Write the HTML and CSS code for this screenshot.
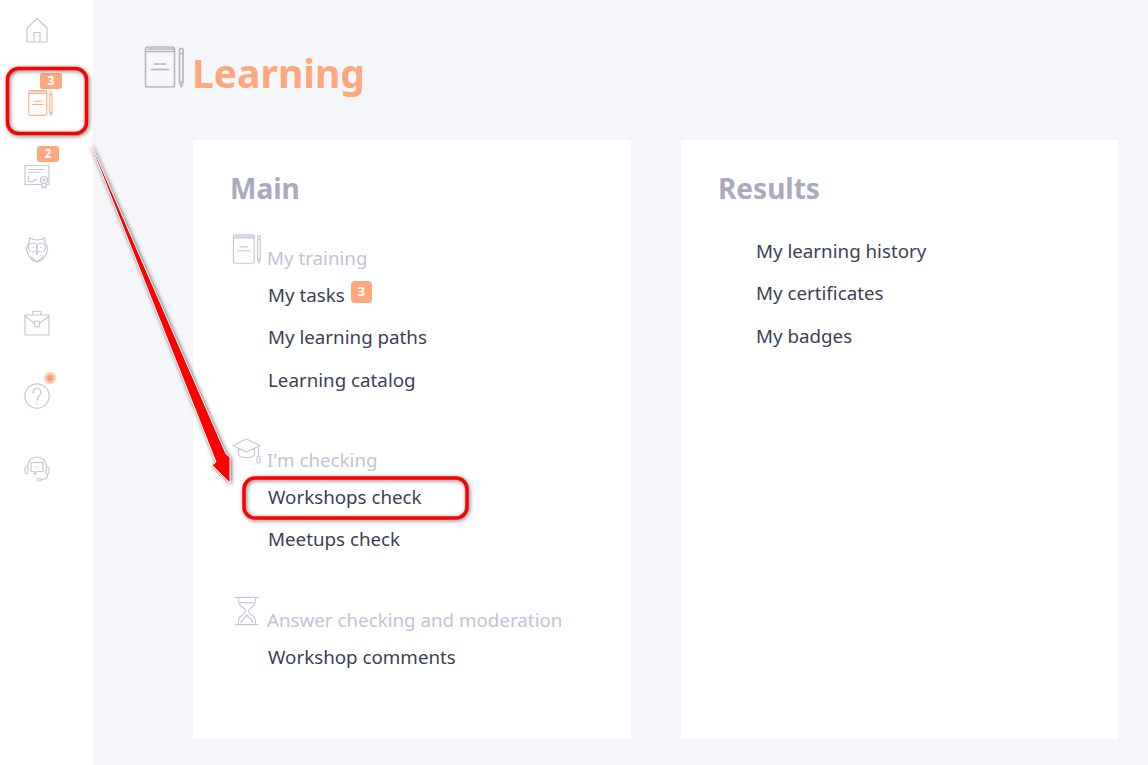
FILE: index.html
```html
<!DOCTYPE html>
<html lang="en">
<head>
    <meta charset="UTF-8">
    <title>Learning</title>
    <link rel="stylesheet" href="styles.css">
</head>
<body>

    <!-- shared notebook icon -->
    <svg class="defs" width="0" height="0">
        <symbol id="book" viewBox="0 0 40 42">
            <g fill="none" stroke="currentColor" stroke-width="1.6" stroke-linecap="round" stroke-linejoin="round">
                <rect x="1" y="1" width="29" height="40" rx="2.5"/>
                <path d="M1 5.5H30M4 3H30"/>
                <path d="M10 18H21M7 23.5H24"/>
                <path d="M35 4a1.8 1.8 0 0 1 3.6 0V36L36.8 41 35 36ZM35 7.5H38.6M35 36H38.6"/>
            </g>
        </symbol>
    </svg>

    <nav class="sidebar">
        <a class="nav-item">
            <svg class="nav-icon" viewBox="0 0 26 26"><path d="M3 25V11L13 1.500 23 11V25ZM10 25V15.500H16V25"/></svg>
        </a>
        <a class="nav-item active">
            <span class="badge nav-badge-first">3</span>
            <svg class="book-nav"><use href="#book"/></svg>
        </a>
        <a class="nav-item">
            <span class="badge nav-badge-second">2</span>
            <svg class="nav-icon" viewBox="0 0 26 26"><path d="M17 21.500H1V2.500H25V21.500H23.500M4.500 6.500H20M4.500 9.500H15M4.500 13V18.500H9L11 16.500H13"/><circle cx="20" cy="17" r="3.500"/><circle cx="20" cy="17" r="1.200"/><path d="M18 20.500V25L20 23.700 22 25V20.500"/></svg>
        </a>
        <a class="nav-item">
            <svg class="nav-icon" viewBox="0 0 26 26"><path d="M5.500 1C7.500 2.500 10 3 13 3S18.500 2.500 20.500 1L21 6C24 9 24 13 22.500 16 21 20.500 17 24 13 25 9 24 5 20.500 3.500 16 2 13 2 9 5 6Z"/><circle cx="9" cy="10.500" r="4.500"/><circle cx="17" cy="10.500" r="4.500"/><path d="M12 15L13 17.500 14 15M7 20L13 25 19 20M9.500 10.500H10M16.500 10.500H17"/></svg>
        </a>
        <a class="nav-item">
            <svg class="nav-icon" viewBox="0 0 26 26"><path d="M1 5H25V25H1ZM9 5V1.500H17V5M1 6L10.500 13.500M25 6L15.500 13.500"/><rect x="10.500" y="11" width="5" height="6" rx="1.500"/></svg>
        </a>
        <a class="nav-item">
            <span class="help-dot"></span>
            <svg class="nav-icon" viewBox="0 0 26 26"><circle cx="13" cy="13" r="12.200"/><path d="M9 10C9 7 11 5 13 5S17 7 17 9.500C17 12.500 13 13 13 17.500M13 20.500V21"/></svg>
        </a>
        <a class="nav-item">
            <svg class="nav-icon" viewBox="0 0 26 26"><path d="M3.500 11C3.500 4.500 8 1 13 1S22.500 4.500 22.500 11"/><rect x="1" y="11" width="3" height="7" rx="1.500"/><rect x="22" y="11" width="3" height="7" rx="1.500"/><path d="M7 6.500H19V15.500H13L10.500 19V15.500H7ZM10.500 11H10.900M13 11H13.400M15.500 11H15.900"/><path d="M23.500 18V20C23.500 23 21 23.500 17 23.500"/><rect x="13" y="22.500" width="4.500" height="2.500" rx="1.200"/></svg>
        </a>
    </nav>

    <main class="content">
        <header class="hero">
            <svg class="hero-icon"><use href="#book"/></svg>
            <h1>Learning</h1>
        </header>

        <div class="cards">
            <section class="card">
                <h2>Main</h2>

                <div class="group">
                    <h3><svg class="group-icon"><use href="#book"/></svg>My training</h3>
                    <a class="link">My tasks <span class="badge link-badge">3</span></a>
                    <a class="link">My learning paths</a>
                    <a class="link">Learning catalog</a>
                </div>

                <div class="group">
                    <h3>
                        <svg class="group-icon" viewBox="0 0 30 30"><path d="M14.500 3L28 9.500 14.500 16 1 9.500ZM6.500 12.500V19C9 22.500 20 22.500 22.500 19V12.500M26.500 10.500V20"/><rect x="25" y="20" width="3" height="7" rx="1.200"/></svg>
                        I'm checking
                    </h3>
                    <a class="link">Workshops check</a>
                    <a class="link">Meetups check</a>
                </div>

                <div class="group">
                    <h3>
                        <svg class="group-icon" viewBox="0 0 30 32"><path d="M3 1.500H27M3 30.500H27M6 1.500V6C6 11 13.500 13 13.500 16S6 21 6 26V30.500M24 1.500V6C24 11 16.500 13 16.500 16S24 21 24 26V30.500M8 7H22M8.500 28.500C10 24 13 23 15 20.500 17 23 20 24 21.500 28.500"/></svg>
                        Answer checking and moderation
                    </h3>
                    <a class="link">Workshop comments</a>
                </div>
            </section>

            <section class="card">
                <h2>Results</h2>
                <div class="plain-group">
                    <a class="link">My learning history</a>
                    <a class="link">My certificates</a>
                    <a class="link">My badges</a>
                </div>
            </section>
        </div>
    </main>

    <!-- red callouts drawn on top of the screenshot -->
    <svg class="callouts" viewBox="0 0 1148 765">
        <rect class="callout" x="7.500" y="68.500" width="79" height="65" rx="11"/>
        <rect class="callout" x="244" y="478" width="223" height="40" rx="11"/>
        <polygon class="arrow" points="91,146 92,146 226,454 230,457 230,483 212,465 216,462"/>
    </svg>

</body>
</html>
```
FILE: styles.css
```css
* {
    box-sizing: border-box;
}
body {
    margin: 0;
    width: 1148px;
    height: 765px;
    overflow: hidden;
    display: flex;
    position: relative;
    font-family: "Noto Sans", "Open Sans", sans-serif;
    background-color: #f5f6fa;
}
.defs {
    position: absolute;
}

/* sidebar */
.sidebar {
    width: 93px;
    flex-shrink: 0;
    background-color: #fff;
    padding: 17px 0 0 24px;
    display: flex;
    flex-direction: column;
    gap: 47.2px;
}
.nav-item {
    display: block;
    position: relative;
    width: 26px;
    height: 26px;
    color: #c6c7db;
}
.nav-item.active {
    color: #ffa77d;
}
.nav-icon {
    display: block;
    width: 26px;
    height: 26px;
    fill: none;
    stroke: currentColor;
    stroke-width: 1.2;
    stroke-linecap: round;
    stroke-linejoin: round;
}
.book-nav {
    display: block;
    width: 25px;
    height: 26px;
    margin-left: 4px;
}
.badge {
    display: inline-block;
    background-color: #ffa77d;
    color: #fff;
    font-size: 12px;
    font-weight: 700;
    line-height: 16px;
    text-align: center;
    border-radius: 3px;
}
.nav-badge-first, .nav-badge-second {
    position: absolute;
    width: 22px;
    height: 16px;
}
.nav-badge-first {
    left: 16px;
    top: -17px;
}
.nav-badge-second {
    left: 13px;
    top: -17px;
}
.help-dot {
    position: absolute;
    left: 21px;
    top: -10px;
    width: 10px;
    height: 10px;
    border-radius: 50%;
    background-color: #ff9e70;
    box-shadow: 0 0 0 1px #ffdcc9, inset 0 0 0 2px #ffc9ad;
}

/* main area */
.content {
    flex: 1;
    padding: 46px 30px 26px 51px;
    display: flex;
    flex-direction: column;
}
.hero {
    display: flex;
    align-items: center;
    gap: 8px;
    height: 42px;
    margin-bottom: 52px;
}
.hero-icon {
    width: 41px;
    height: 42px;
    color: #b6b7bf;
}
.hero h1 {
    margin: 11px 0 0 -1px;
    font-size: 39px;
    line-height: 54px;
    font-weight: 700;
    color: #ffa77d;
}
.cards {
    flex: 1;
    margin-left: 49px;
    display: grid;
    grid-template-columns: 438px 437px;
    gap: 50px;
}
.card {
    background-color: #fff;
    padding: 30px 38px 0;
}
.card h2 {
    margin: 0 0 27px -1px;
    font-size: 28px;
    line-height: 37px;
    font-weight: 700;
    color: #a9abbc;
}
.group {
    margin-bottom: 35.200px;
}
.group h3 {
    margin: 0;
    height: 40px;
    display: flex;
    align-items: flex-end;
    font-size: 18.750px;
    line-height: 32px;
    font-weight: 400;
    color: #c1c3d6;
}
.group-icon {
    align-self: flex-start;
    flex-shrink: 0;
    width: 30px;
    height: 30px;
    margin: 0 5px 0 1px;
    color: #c6c7db;
    fill: none;
    stroke: currentColor;
    stroke-width: 1.2;
    stroke-linejoin: round;
    stroke-linecap: round;
}
.plain-group {
    margin-top: -4px;
}
.link {
    display: block;
    padding-left: 37px;
    font-size: 18.750px;
    line-height: 42.300px;
    color: #3b3f55;
}
.link-badge {
    width: 21px;
    height: 22px;
    line-height: 21px;
    font-size: 13px;
    border-radius: 4px;
    vertical-align: 6px;
    margin-left: 1px;
}

/* callouts */
.callouts {
    position: absolute;
    left: 0;
    top: 0;
    width: 1148px;
    height: 765px;
}
.callout {
    fill: none;
    stroke: #f00;
    stroke-width: 3.500;
    filter: drop-shadow(1px 1px 2px rgba(0, 0, 0, 0.55));
}
.arrow {
    fill: #f00;
    stroke: #fff;
    stroke-width: 1;
    filter: drop-shadow(1px 1px 2px rgba(0, 0, 0, 0.6));
}
```
